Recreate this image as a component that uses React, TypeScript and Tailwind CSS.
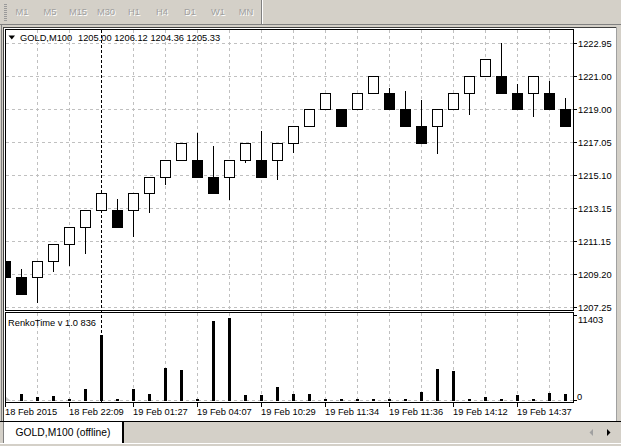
import React from "react";

const T = (L: number) => Math.round(59 + 16.8 * L);

// [centerX, isBlack, level, wickEnd]
const candles: [number, number, number, number][] = [
  [5, 1, 12, 233],
  [21, 1, 13, 269],
  [37, 0, 12, 303],
  [53, 0, 11, 272],
  [69, 0, 10, 266],
  [85, 0, 9, 254],
  [101, 0, 8, 0],
  [117, 1, 9, 199],
  [133, 0, 8, 237],
  [149, 0, 7, 213],
  [165, 0, 6, 185],
  [181, 0, 5, 0],
  [197, 1, 6, 133],
  [213, 1, 7, 146],
  [229, 0, 6, 200],
  [245, 0, 5, 163],
  [261, 1, 6, 131],
  [277, 0, 5, 180],
  [293, 0, 4, 153],
  [309, 0, 3, 0],
  [325, 0, 2, 0],
  [341, 1, 3, 0],
  [357, 0, 2, 0],
  [373, 0, 1, 0],
  [389, 1, 2, 88],
  [405, 1, 3, 91],
  [421, 1, 4, 100],
  [437, 0, 3, 154],
  [453, 0, 2, 0],
  [469, 0, 1, 115],
  [485, 0, 0, 0],
  [501, 1, 1, 43],
  [517, 1, 2, 84],
  [533, 0, 1, 117],
  [549, 1, 2, 81],
  [565, 1, 3, 98],
];

const bars: [number, number][] = [
  [21, 394], [37, 397], [53, 396], [69, 399], [85, 389], [101, 335], [117, 399],
  [133, 389], [149, 394], [165, 368], [181, 370], [197, 399], [213, 321], [229, 318],
  [245, 395], [261, 395], [277, 387], [293, 394], [309, 394], [325, 399], [341, 399],
  [357, 399], [373, 399], [389, 399], [405, 399], [421, 392], [437, 369], [453, 371],
  [469, 399], [485, 397], [501, 399], [517, 395], [533, 399], [549, 393], [565, 394],
];

const priceLevels: [number, string][] = [
  [43, "1222.95"], [76, "1221.00"], [109, "1219.00"], [142, "1217.05"], [175, "1215.10"],
  [208, "1213.15"], [241, "1211.15"], [274, "1209.20"], [307, "1207.25"],
];

const vGrid = [37, 69, 133, 165, 197, 229, 261, 293, 325, 357, 389, 421, 453, 485, 517, 549];

const timeLabels: [number, string][] = [
  [5, "18 Feb 2015"], [69, "18 Feb 22:09"], [133, "19 Feb 01:27"], [197, "19 Feb 04:07"],
  [261, "19 Feb 10:29"], [325, "19 Feb 11:34"], [389, "19 Feb 11:36"], [453, "19 Feb 14:12"],
  [517, "19 Feb 14:37"],
];

const tfs = ["M1", "M5", "M15", "M30", "H1", "H4", "D1", "W1", "MN"];

function Toolbar() {
  return (
    <div className="h-[25px] shrink-0 flex border-b border-[#808080] bg-[#d4d0c8]">
      <div className="w-[8px] flex items-center pl-[4px]">
        <svg width="3" height="17" viewBox="0 0 3 17">
          {Array.from({ length: 9 }).map((_, i) => (
            <rect key={i} x="0" y={i * 2} width="3" height="1" fill="#9a9a9a" />
          ))}
        </svg>
      </div>
      {tfs.map((t) => (
        <div
          key={t}
          className="w-[28px] flex items-center justify-center pt-[2px] text-[9.3px] text-[#a0a0a0] [text-shadow:1px_1px_0_#ffffff]"
        >
          {t}
        </div>
      ))}
      <div className="ml-[1px] w-[2px] border-l border-[#808080] border-r border-r-white" />
    </div>
  );
}

function Chart() {
  const dash = "3 3";
  return (
    <svg width="621" height="396" viewBox="0 25 621 396" className="block shrink-0">
      <defs>
        <clipPath id="plot">
          <rect x="5" y="30" width="568" height="280" />
        </clipPath>
      </defs>
      {/* window */}
      <rect x="0" y="25" width="621" height="396" fill="#d4d0c8" />
      <rect x="4" y="28" width="612" height="393" fill="#ffffff" />
      <rect x="1" y="25" width="1" height="396" fill="#808080" />
      <rect x="3" y="27" width="1" height="394" fill="#404040" />
      <rect x="3" y="27" width="613" height="1" fill="#404040" />
      <rect x="616" y="27" width="1" height="394" fill="#a0a0a0" />

      {/* grid main */}
      <g stroke="#c0c0c0" strokeWidth="1" strokeDasharray={dash}>
        {priceLevels.map(([y]) => (
          <line key={"h" + y} x1="6" x2="573" y1={y + 0.5} y2={y + 0.5} />
        ))}
        {vGrid.map((x) => (
          <line key={"v" + x} x1={x + 0.5} x2={x + 0.5} y1="30" y2="310" />
        ))}
        {vGrid.map((x) => (
          <line key={"vi" + x} x1={x + 0.5} x2={x + 0.5} y1="313" y2="402" />
        ))}
        <line x1="6" x2="573" y1="400.5" y2="400.5" />
      </g>

      {/* crosshair */}
      <line x1="101.5" x2="101.5" y1="30" y2="403" stroke="#000" strokeDasharray="3 2" />

      {/* candles */}
      <g clipPath="url(#plot)">
        {candles.map(([c, b, L, w]) => {
          const top = T(L);
          const bot = T(L + 1);
          if (b) {
            return (
              <g key={c}>
                {w > 0 && <line x1={c + 0.5} x2={c + 0.5} y1={w} y2={top} stroke="#000" />}
                <rect x={c - 5} y={top} width="11" height={bot - top + 1} fill="#000" />
              </g>
            );
          }
          return (
            <g key={c}>
              {w > 0 && <line x1={c + 0.5} x2={c + 0.5} y1={bot + 1} y2={w} stroke="#000" />}
              <rect x={c - 4.5} y={top + 0.5} width="10" height={bot - top} fill="#fff" stroke="#000" />
            </g>
          );
        })}
      </g>

      {/* volume bars */}
      <polygon points="5,396 5,401 11,401" fill="#c8c8c8" />
      {bars.map(([c, top]) => (
        <rect key={"b" + c} x={c - 1} y={top} width="3" height={401 - top} fill="#000" />
      ))}

      {/* frames */}
      <rect x="5.5" y="29.5" width="568" height="281" fill="none" stroke="#000" />
      <rect x="5.5" y="312.5" width="568" height="90" fill="none" stroke="#000" />

      {/* price axis */}
      <g fontFamily="'Liberation Sans', Arial, sans-serif" fontSize="9.3" fill="#000">
        {priceLevels.map(([y, t]) => (
          <g key={"p" + y}>
            <line x1="573" x2="577" y1={y + 0.5} y2={y + 0.5} stroke="#000" />
            <text x="578" y={y + 4}>{t}</text>
          </g>
        ))}
        <line x1="573" x2="577" y1="315.5" y2="315.5" stroke="#000" />
        <line x1="573" x2="577" y1="400.5" y2="400.5" stroke="#000" />
        <text x="578" y="323">11403</text>
        <text x="577" y="400">0</text>

        {timeLabels.map(([x, t]) => (
          <g key={"t" + x}>
            <line x1={x + 0.5} x2={x + 0.5} y1="403" y2="407" stroke="#000" />
            <text x={x} y="415">{t}</text>
          </g>
        ))}

        <polygon points="8.5,35.5 15,35.5 11.75,39.5" fill="#000" />
        <text x="20" y="40.5">GOLD,M100</text>
        <text x="78" y="40.5">1205.00 1206.12 1204.36 1205.33</text>
        <text x="8" y="326">RenkoTime v 1.0 836</text>
      </g>
    </svg>
  );
}

function TabBar() {
  return (
    <div className="h-[25px] shrink-0 flex flex-col border-t border-black bg-[#d4d0c8]">
      <div className="h-[21px] flex">
        <div className="ml-[3px] w-[121px] h-full bg-white border-l border-[#808080] border-r-2 border-r-black flex items-center justify-center text-[10.3px] text-black pt-[1px]">
          GOLD,M100 (offline)
        </div>
        <div className="ml-auto mr-[10px] flex items-center">
          <svg width="22" height="9" viewBox="0 0 22 9">
            <polygon points="4,1 4,8 0.5,4.5" fill="#a0a0a0" />
            <polygon points="18,1 18,8 21.5,4.5" fill="#000" />
          </svg>
        </div>
      </div>
      <div className="flex-1 border-t border-white" />
    </div>
  );
}

export default function App() {
  return (
    <div className="w-[621px] h-[446px] overflow-hidden bg-[#d4d0c8] flex flex-col font-['Liberation_Sans',Arial,sans-serif]">
      <Toolbar />
      <Chart />
      <TabBar />
    </div>
  );
}
